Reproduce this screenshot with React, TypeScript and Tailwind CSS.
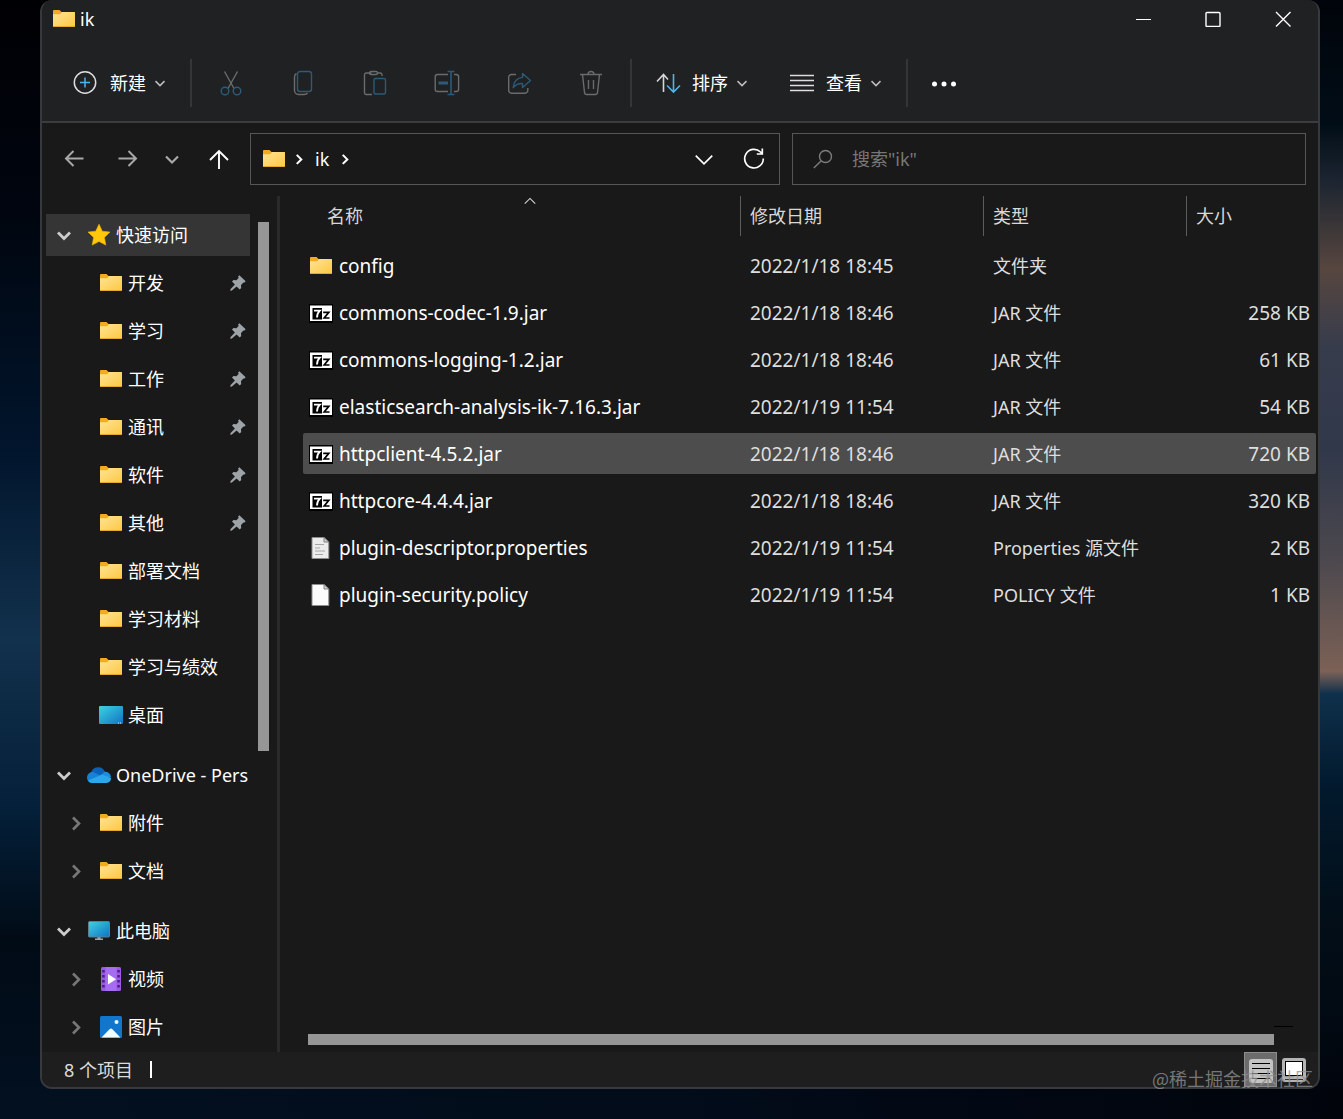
import type { ReactNode } from 'react'

type FileKind = 'folder' | 'archive' | 'text' | 'blank'

interface FileItem {
  name: string
  date: string
  type: string
  size?: string
  kind: FileKind
}

const FILES: FileItem[] = [
  { name: 'config', date: '2022/1/18 18:45', type: '文件夹', kind: 'folder' },
  { name: 'commons-codec-1.9.jar', date: '2022/1/18 18:46', type: 'JAR 文件', size: '258 KB', kind: 'archive' },
  { name: 'commons-logging-1.2.jar', date: '2022/1/18 18:46', type: 'JAR 文件', size: '61 KB', kind: 'archive' },
  { name: 'elasticsearch-analysis-ik-7.16.3.jar', date: '2022/1/19 11:54', type: 'JAR 文件', size: '54 KB', kind: 'archive' },
  { name: 'httpclient-4.5.2.jar', date: '2022/1/18 18:46', type: 'JAR 文件', size: '720 KB', kind: 'archive' },
  { name: 'httpcore-4.4.4.jar', date: '2022/1/18 18:46', type: 'JAR 文件', size: '320 KB', kind: 'archive' },
  { name: 'plugin-descriptor.properties', date: '2022/1/19 11:54', type: 'Properties 源文件', size: '2 KB', kind: 'text' },
  { name: 'plugin-security.policy', date: '2022/1/19 11:54', type: 'POLICY 文件', size: '1 KB', kind: 'blank' },
]

const ACTIVE_FILE = 'httpclient-4.5.2.jar'

const PINNED = ['开发', '学习', '工作', '通讯', '软件', '其他']
const RECENT = ['部署文档', '学习材料', '学习与绩效']

function FolderIcon() {
  return (
    <svg width="24" height="24" viewBox="0 0 24 24" className="shrink-0" aria-hidden="true">
      <defs>
        <linearGradient id="folder" x1="0" y1="0" x2="1" y2="1">
          <stop offset="0" stopColor="#ffe394" />
          <stop offset="1" stopColor="#fcc844" />
        </linearGradient>
      </defs>
      <path d="M1 4a1 1 0 0 1 1-1h5.500l2 2H22a1 1 0 0 1 1 1v4H1z" fill="#f0ab22" />
      <path d="M1 7.200h7.200L10 5h12.200a.8.8 0 0 1 .8.800V19a1 1 0 0 1-1 1H2a1 1 0 0 1-1-1z" fill="url(#folder)" />
      <path d="M1.500 19.500h21" stroke="#e3a92c" strokeWidth="1" />
    </svg>
  )
}

function StarIcon() {
  return (
    <svg width="24" height="24" viewBox="0 0 24 24" className="shrink-0" aria-hidden="true">
      <path
        d="M12 1.200l3.300 7 7.700.900-5.600 5.300 1.400 7.700L12 18.400l-6.800 3.700 1.400-7.700L1 9.100l7.700-.9z"
        fill="#ffc80a"
        stroke="#f7b500"
        strokeWidth=".6"
        strokeLinejoin="round"
      />
    </svg>
  )
}

function DesktopIcon() {
  return (
    <svg width="24" height="24" viewBox="0 0 24 24" className="shrink-0" aria-hidden="true">
      <defs>
        <linearGradient id="screen" x1="0" y1="0" x2="1" y2="1">
          <stop offset="0" stopColor="#3fd2e0" />
          <stop offset="1" stopColor="#0f73c4" />
        </linearGradient>
      </defs>
      <rect y="3" width="24" height="18" rx="1" fill="url(#screen)" />
      <path d="M19 20h1m1 0h1" stroke="#d7f3ff" strokeWidth="1" />
    </svg>
  )
}

function ComputerIcon() {
  return (
    <svg width="24" height="24" viewBox="0 0 24 24" className="shrink-0" aria-hidden="true">
      <path d="M10.500 17h3v2.500h2.500V21H8v-1.500h2.500z" fill="#9aa7ad" />
      <rect x="1.500" y="2.500" width="21" height="15.500" rx="1" fill="url(#screen)" stroke="#5f7f8c" strokeWidth="1" />
    </svg>
  )
}

function CloudIcon() {
  return (
    <svg width="24" height="24" viewBox="0 0 24 24" className="shrink-0" aria-hidden="true">
      <path d="M4 10A7.300 7.300 0 0 1 18 9L12 17 2 14z" fill="#0a62b8" />
      <path d="M0 14.800a5.500 5.500 0 0 1 7-5.600l9 4.800-5 6H5a5.300 5.300 0 0 1-5-5.200z" fill="#1681d6" />
      <path d="M12 14l5.500-5.300A6 6 0 0 1 24 14l-6 3z" fill="#1a8fe0" />
      <path d="M1 17.500L15 11.500l9 3.500a4.500 4.500 0 0 1-4.500 5H5a5 5 0 0 1-4-2.500z" fill="#2ba7ea" />
    </svg>
  )
}

function VideoIcon() {
  return (
    <svg width="24" height="24" viewBox="0 0 24 24" className="shrink-0" aria-hidden="true">
      <rect x="2" width="20" height="24" rx="1.500" fill="#9c5ae0" />
      <rect x="6.500" width="11" height="24" fill="#a76df0" />
      <path d="M3.200 3h2.500v2.500H3.200zm0 5h2.500v2.500H3.200zm0 5h2.500v2.500H3.200zm0 5h2.500v2.500H3.200zM18.300 3h2.500v2.500h-2.500zm0 5h2.500v2.500h-2.500zm0 5h2.500v2.500h-2.500zm0 5h2.500v2.500h-2.500z" fill="#4a1f86" />
      <path d="M9 7v10.500l8-5.200z" fill="#fff" />
    </svg>
  )
}

function PictureIcon() {
  return (
    <svg width="24" height="24" viewBox="0 0 24 24" className="shrink-0" aria-hidden="true">
      <rect x="1" y="1" width="22" height="22" rx="1.500" fill="#1277cc" />
      <path d="M2.500 22.500l8-8.300a2 2 0 0 1 2.900 0l8 8.300z" fill="#f2fbff" />
      <circle cx="17.500" cy="7" r="2" fill="#e8f7ff" />
    </svg>
  )
}

function ArchiveIcon() {
  return (
    <svg width="24" height="24" viewBox="0 0 24 24" className="shrink-0" aria-hidden="true">
      <rect y="3" width="24" height="19" fill="#000" />
      <rect x="1" y="4.500" width="22" height="15.500" fill="#fff" />
      <rect x="3.500" y="7" width="9.500" height="11.500" fill="#000" />
      <path d="M5 9.600h5.800c-1.900 1.800-2.700 3.800-2.800 6.900" fill="none" stroke="#fff" strokeWidth="1.900" />
      <path d="M14.200 11.300h5.600L15.200 17h5.300" fill="none" stroke="#000" strokeWidth="1.700" />
    </svg>
  )
}

function PageIcon({ lined }: { lined?: boolean }) {
  return (
    <svg width="24" height="24" viewBox="0 0 24 24" className="shrink-0" aria-hidden="true">
      <path d="M3 1.500h12L19.800 6v16.500H3z" fill={lined ? '#ececec' : '#fbfbfb'} stroke="#8c8c8c" strokeWidth="1" />
      <path d="M15 1.500V6h4.800z" fill="#d5d5d5" stroke="#6b6b6b" strokeWidth=".8" />
      {lined && <path d="M6 8.500h9M6 12h5M6 15h10M6 18.500h8" stroke="#a5a5a5" strokeWidth="1.100" />}
    </svg>
  )
}

const KIND_ICONS: Record<FileKind, ReactNode> = {
  folder: <FolderIcon />,
  archive: <ArchiveIcon />,
  text: <PageIcon lined />,
  blank: <PageIcon />,
}

function PinIcon() {
  return (
    <svg width="16" height="16" viewBox="0 0 16 16" className="shrink-0 text-[#9da3a6]" aria-hidden="true">
      <path d="M9.300.3l6.400 6-1.300 1.300-.9-.2-2.500 2.600.2 2.900-1.500 1.500-3.100-3L1.600 15.700.3 15.500l.1-1.200L4.900 9.600 2 6.600l1.500-1.500 3 .1L8.700 2.700l-.7-1z" fill="currentColor" />
    </svg>
  )
}

function Chevron({ dir = 'down', size = 16, weight = 2, className = '' }: {
  dir?: 'down' | 'right' | 'up'
  size?: number
  weight?: number
  className?: string
}) {
  const paths = { down: 'M2 5.500l6 6 6-6', right: 'M5 2.500l6 6-6 6', up: 'M2 11l6-6 6 6' }
  return (
    <svg width={size} height={size} viewBox="0 0 16 16" className={`shrink-0 ${className}`} aria-hidden="true">
      <path d={paths[dir]} fill="none" stroke="currentColor" strokeWidth={weight} />
    </svg>
  )
}

function ToolIcon({ children }: { children: ReactNode }) {
  return (
    <svg width="26" height="26" viewBox="0 0 26 26" fill="none" strokeWidth="1.400" className="shrink-0" aria-hidden="true">
      {children}
    </svg>
  )
}

const GRAY = '#6a6b6c'
const BLUE = '#2c5a78'

const TOOLS: { label: string; icon: ReactNode }[] = [
  {
    label: '剪切',
    icon: (
      <ToolIcon>
        <path d="M6.500 1.500l9.500 17M19.500 1.500L10 18.500" stroke={GRAY} />
        <circle cx="7" cy="21" r="3.800" stroke={BLUE} />
        <circle cx="19" cy="21" r="3.800" stroke={BLUE} />
      </ToolIcon>
    ),
  },
  {
    label: '复制',
    icon: (
      <ToolIcon>
        <path d="M6.500 3.500Q4.500 4.500 4.500 7v13.500a4 4 0 0 0 4 4H14q2.500 0 3.500-1.500" stroke={GRAY} />
        <rect x="7.500" y="1.500" width="14" height="20" rx="2.500" stroke={BLUE} />
      </ToolIcon>
    ),
  },
  {
    label: '粘贴',
    icon: (
      <ToolIcon>
        <path d="M9.500 3H4.200A1.700 1.700 0 0 0 2.500 4.700v18.100a1.700 1.700 0 0 0 1.700 1.700H10M15 3h3.300A1.700 1.700 0 0 1 20 4.700V6" stroke={GRAY} />
        <rect x="7.500" y="1.500" width="8" height="3" rx="1.500" stroke={GRAY} />
        <rect x="12" y="8.500" width="11.500" height="15.500" rx="1.500" stroke={BLUE} />
      </ToolIcon>
    ),
  },
  {
    label: '重命名',
    icon: (
      <ToolIcon>
        <path d="M14 4.500H3.500a2.300 2.300 0 0 0-2.300 2.300v12.400a2.300 2.300 0 0 0 2.300 2.300H14M20 4.500h2.300a2.300 2.300 0 0 1 2.300 2.300v12.400a2.300 2.300 0 0 1-2.300 2.300H20" stroke={GRAY} />
        <path d="M17 1.500v23M13.500 1.500h7M13.500 24.500h7" stroke={BLUE} strokeWidth="1.600" />
        <path d="M4.500 13h9.500" stroke={BLUE} strokeWidth="3" />
      </ToolIcon>
    ),
  },
  {
    label: '共享',
    icon: (
      <ToolIcon>
        <path d="M10 4.500H5.500A2.800 2.800 0 0 0 2.700 7.300v13A2.800 2.800 0 0 0 5.500 23.200h13.500a2.800 2.800 0 0 0 2.800-2.900V18" stroke={GRAY} />
        <path d="M16.500 3.500l8 7-8 7v-4c-4-.2-7 1-9.300 4.200C7.500 11.500 11.500 7.700 16.500 7.400z" stroke={BLUE} strokeLinejoin="round" />
      </ToolIcon>
    ),
  },
  {
    label: '删除',
    icon: (
      <ToolIcon>
        <path d="M2 4.500h22M10 4.500a3 3 0 0 1 6 0M4.500 4.500l2 18a2.200 2.200 0 0 0 2.200 2h8.600a2.200 2.200 0 0 0 2.200-2l2-18M10.500 10v9M15.500 10v9" stroke={GRAY} />
      </ToolIcon>
    ),
  },
]

function Divider() {
  return <div className="h-12 w-0.5 shrink-0 bg-[#353637]" />
}

function TitleBar() {
  return (
    <div className="flex h-11 items-center bg-[#202122] pb-1.5 pl-2.5">
      <FolderIcon />
      <span className="ml-1 flex-1">ik</span>
      <button type="button" aria-label="最小化" className="flex w-[70px] justify-center">
        <svg width="16" height="16" viewBox="0 0 16 16" stroke="#fff" aria-hidden="true">
          <path d="M1 8.500h15" />
        </svg>
      </button>
      <button type="button" aria-label="最大化" className="flex w-[70px] justify-center">
        <svg width="16" height="16" viewBox="0 0 16 16" fill="none" stroke="#fff" strokeWidth="1.400" aria-hidden="true">
          <rect x="1" y="1.500" width="14" height="14" rx="1" />
        </svg>
      </button>
      <button type="button" aria-label="关闭" className="flex w-[70px] justify-center">
        <svg width="16" height="16" viewBox="0 0 16 16" fill="none" stroke="#fff" strokeWidth="1.400" aria-hidden="true">
          <path d="M1 1l14.500 14.500M15.500 1L1 15.500" />
        </svg>
      </button>
    </div>
  )
}

function Toolbar() {
  return (
    <div className="flex h-[79px] items-center border-b-2 border-[#3b3c3d] bg-[#202122] pl-[30px]">
      <button type="button" className="mr-6 flex items-center">
        <svg width="26" height="26" viewBox="0 0 26 26" fill="none" aria-hidden="true">
          <circle cx="13" cy="12.500" r="10.700" stroke="#dcdcdc" strokeWidth="1.500" />
          <path d="M13 7.500v10M8 12.500h10" stroke="#4cb4ee" strokeWidth="1.500" />
        </svg>
        <span className="mr-2 ml-3">新建</span>
        <Chevron size={12} weight={2} className="text-[#bdbdbd]" />
      </button>
      <Divider />
      <div className="mx-[3px] flex">
        {TOOLS.map((tool) => (
          <button key={tool.label} type="button" aria-label={tool.label} className="flex w-[72px] justify-center">
            {tool.icon}
          </button>
        ))}
      </div>
      <Divider />
      <button type="button" className="ml-[23px] flex items-center">
        <svg width="26" height="26" viewBox="0 0 26 26" fill="none" strokeWidth="1.600" aria-hidden="true">
          <path d="M8.500 22V5M2 11.500L8.500 4.500 13 9.500" stroke="#d6d6d6" />
          <path d="M18.500 4v17M12 15.500l6.500 6.500 6.500-6.500" stroke="#4cb4ee" />
        </svg>
        <span className="mr-2 ml-[11px]">排序</span>
        <Chevron size={12} weight={2} className="text-[#bdbdbd]" />
      </button>
      <button type="button" className="mr-6 ml-[41px] flex items-center">
        <svg width="26" height="26" viewBox="0 0 26 26" stroke="#dedede" strokeWidth="1.400" aria-hidden="true">
          <path d="M1 5.500h24M1 10.500h24M1 15.500h24M1 20.500h24" />
        </svg>
        <span className="mr-2 ml-[11px]">查看</span>
        <Chevron size={12} weight={2} className="text-[#bdbdbd]" />
      </button>
      <Divider />
      <button type="button" aria-label="更多" className="ml-[23px]">
        <svg width="26" height="26" viewBox="0 0 26 26" fill="#fff" aria-hidden="true">
          <circle cx="3.500" cy="14" r="2.500" />
          <circle cx="13" cy="14" r="2.500" />
          <circle cx="22.500" cy="14" r="2.500" />
        </svg>
      </button>
    </div>
  )
}

function AddressRow() {
  return (
    <div className="flex items-center pt-2.5 pr-3 pb-[11px] pl-[22px]">
      <button type="button" aria-label="后退" className="mr-[34px] text-[#a8a8a8]">
        <svg width="20" height="20" viewBox="0 0 20 20" fill="none" stroke="currentColor" strokeWidth="2" aria-hidden="true">
          <path d="M19.500 9.500H2M9.500 2L2 9.500 9.500 17" />
        </svg>
      </button>
      <button type="button" aria-label="前进" className="mr-[26px] text-[#a8a8a8]">
        <svg width="20" height="20" viewBox="0 0 20 20" fill="none" stroke="currentColor" strokeWidth="2" aria-hidden="true">
          <path d="M.5 9.500H18M10.500 2L18 9.500 10.500 17" />
        </svg>
      </button>
      <button type="button" aria-label="最近浏览的位置" className="mr-7 text-[#a8a8a8]">
        <Chevron weight={2.2} />
      </button>
      <button type="button" aria-label="上移" className="mr-5">
        <svg width="22" height="22" viewBox="0 0 22 22" fill="none" stroke="#fff" strokeWidth="1.900" aria-hidden="true">
          <path d="M11 21V3M2 12l9-9 9 9" />
        </svg>
      </button>
      <div className="mr-3 flex h-[52px] flex-[503] items-center border border-[#565656] pr-3.5 pl-[11px]">
        <FolderIcon />
        <Chevron dir="right" size={12} weight={2.8} className="mx-[7px]" />
        <a href="#ik" className="mx-[3px]">ik</a>
        <Chevron dir="right" size={12} weight={2.8} className="mx-[7px]" />
        <button type="button" aria-label="以前的位置" className="mr-7 ml-auto">
          <Chevron size={22} weight={1.2} />
        </button>
        <button type="button" aria-label="刷新">
          <svg width="22" height="22" viewBox="0 0 22 22" fill="none" stroke="#fff" strokeWidth="1.700" aria-hidden="true">
            <path d="M20.300 10.500A9.300 9.300 0 1 1 17.500 4l1.500 1.500M19.300.5V6h-5.500" />
          </svg>
        </button>
      </div>
      <label className="flex h-[52px] flex-[492] items-center border border-[#565656] pl-5">
        <svg width="20" height="20" viewBox="0 0 20 20" fill="none" stroke="#7d7d7d" strokeWidth="1.400" aria-hidden="true">
          <circle cx="12.500" cy="7.500" r="6" />
          <path d="M8 12L.8 19" />
        </svg>
        <input
          type="text"
          aria-label="搜索"
          placeholder={'搜索"ik"'}
          className="ml-[19px] min-w-0 flex-1 bg-transparent outline-none placeholder:text-[#777777]"
        />
      </label>
    </div>
  )
}

function Group({ icon, label, active, children }: {
  icon: ReactNode
  label: string
  active?: boolean
  children: ReactNode
}) {
  return (
    <section className="mb-3">
      <div className="flex h-12 items-center pl-1">
        <a
          href="#group"
          className={`flex h-[42px] w-full items-center whitespace-nowrap ${active ? 'bg-[#353535]' : ''}`}
        >
          <Chevron weight={2.8} className="mr-[15px] ml-2.5 text-[#cccccc]" />
          {icon}
          <span className="ml-[5px]">{label}</span>
        </a>
      </div>
      <ul>{children}</ul>
    </section>
  )
}

function Entry({ icon, label, pinned, expandable }: {
  icon: ReactNode
  label: string
  pinned?: boolean
  expandable?: boolean
}) {
  return (
    <li>
      <a href="#entry" className="flex h-12 items-center pr-1 pl-[26px]">
        <span className="mr-[15px] w-4">
          {expandable && <Chevron dir="right" weight={2.6} className="text-[#777777]" />}
        </span>
        {icon}
        <span className="ml-[5px] flex-1">{label}</span>
        {pinned && <PinIcon />}
      </a>
    </li>
  )
}

function Sidebar() {
  return (
    <div className="flex w-[238px] shrink-0 border-r-[3px] border-[#2a2a2a]">
      <nav className="w-[208px] pt-[15px]">
        <Group icon={<StarIcon />} label="快速访问" active>
          {PINNED.map((label) => (
            <Entry key={label} icon={<FolderIcon />} label={label} pinned />
          ))}
          {RECENT.map((label) => (
            <Entry key={label} icon={<FolderIcon />} label={label} />
          ))}
          <Entry icon={<DesktopIcon />} label="桌面" />
        </Group>
        <Group icon={<CloudIcon />} label="OneDrive - Pers">
          <Entry icon={<FolderIcon />} label="附件" expandable />
          <Entry icon={<FolderIcon />} label="文档" expandable />
        </Group>
        <div className="-mb-3">
          <Group icon={<ComputerIcon />} label="此电脑">
            <Entry icon={<VideoIcon />} label="视频" expandable />
            <Entry icon={<PictureIcon />} label="图片" expandable />
          </Group>
        </div>
      </nav>
      <div className="mt-[26px] ml-2 h-[529px] w-[11px] bg-[#969696]" />
    </div>
  )
}

function FileRow({ file }: { file: FileItem }) {
  const active = file.name === ACTIVE_FILE
  const bg = active ? 'bg-[#4d4d4d]' : ''
  return (
    <tr className="text-[#dedede]">
      <td className="py-[3px]">
        <div className={`flex h-[41px] items-center rounded-l-xs pl-1.5 text-[19px] text-white ${bg}`}>
          {KIND_ICONS[file.kind]}
          <span className="ml-1.5">{file.name}</span>
        </div>
      </td>
      <td className="py-[3px]">
        <div className={`flex h-[41px] items-center pl-2.5 text-[19px] ${bg}`}>{file.date}</div>
      </td>
      <td className="py-[3px]">
        <div className={`flex h-[41px] items-center pl-2.5 ${bg}`}>{file.type}</div>
      </td>
      <td className="py-[3px]">
        <div className={`flex h-[41px] items-center justify-end rounded-r-xs pr-1.5 text-[19px] ${bg}`}>{file.size}</div>
      </td>
    </tr>
  )
}

function FileTable() {
  return (
    <main className="flex min-w-0 flex-1 flex-col">
      <div className="pr-0.5 pl-[23px]">
        <table className="w-full table-fixed whitespace-nowrap">
          <colgroup>
            <col />
            <col className="w-[243px]" />
            <col className="w-[203px]" />
            <col className="w-[130px]" />
          </colgroup>
          <thead className="text-left text-[#d8d8d8]">
            <tr>
              <th className="p-0 pb-1.5 font-normal">
                <div className="relative flex h-10 items-center pl-6">
                  名称
                  <Chevron dir="up" size={14} weight={1.2} className="absolute top-[-2px] left-[220px]" />
                </div>
              </th>
              {['修改日期', '类型', '大小'].map((label) => (
                <th key={label} className="p-0 pb-1.5 font-normal">
                  <div className="flex h-10 items-center border-l border-[#5c5c5c] pl-[9px]">{label}</div>
                </th>
              ))}
            </tr>
          </thead>
          <tbody>
            {FILES.map((file) => (
              <FileRow key={file.name} file={file} />
            ))}
          </tbody>
        </table>
      </div>
      <div className="mt-auto mb-[7px] flex pr-[25px] pl-7">
        <div className="mt-2 h-[11px] flex-1 bg-[#969696]" />
        <div className="h-px w-[19px] bg-black" />
      </div>
    </main>
  )
}

function StatusBar() {
  return (
    <footer className="flex h-[35px] items-center bg-[#1e1e1e] pr-3 pl-[22px] text-[#dcdcdc]">
      <span>8 个项目</span>
      <span className="ml-[17px] h-[17px] w-0.5 bg-white" />
      <button type="button" aria-label="详细信息" className="ml-auto flex h-[35px] w-[33px] items-center justify-center border border-[#8c8c8c] bg-[#6c6c6c]">
        <svg width="26" height="26" viewBox="0 0 26 26" aria-hidden="true">
          <rect x="1" y="2" width="24" height="24" rx="3" fill="#c4c4c4" />
          <path d="M4 6.500h18M4 11.500h18M4 16.500h18M4 21.500h18" stroke="#000" />
        </svg>
      </button>
      <button type="button" aria-label="大缩略图" className="ml-[5px]">
        <svg width="24" height="24" viewBox="0 0 24 24" aria-hidden="true">
          <rect width="24" height="24" rx="3" fill="#b4b4b4" />
          <rect x="3.500" y="3.500" width="17" height="14" fill="#fff" stroke="#000" />
          <path d="M3 21.500h18" stroke="#333" />
        </svg>
      </button>
    </footer>
  )
}

export default function App() {
  return (
    <div className="relative flex min-h-screen flex-col bg-[linear-gradient(#000003,#000610_20%,#01152c_40%,#12314c_57%,#0d2a44_63%,#04203a_72%,#010b16_84%,#021020_100%)]">
      <div className="absolute top-0 right-0 bottom-0 w-10 bg-[linear-gradient(#01040a,#010d16_11%,#1b2430_16%,#57463f_24%,#373c4c_31%,#30384a_40%,#4c484e_50%,#7c6156_60%,#0f304b_62%,#021a2e_70%,#020e18_82%,#01040b_100%)]" />
      <div className="absolute right-0 bottom-0 left-0 h-8 bg-linear-to-r from-[#021020] via-[#020c1a] to-[#01040b]" />
      <div className="relative mr-[23px] mb-[30px] ml-10 flex flex-1 flex-col overflow-hidden rounded-xl border-2 border-t-0 border-[#38393c] bg-[#191919] font-['Noto_Sans','Noto_Sans_CJK_SC',sans-serif] text-[18px] leading-6 text-white">
        <TitleBar />
        <Toolbar />
        <AddressRow />
        <div className="flex flex-1">
          <Sidebar />
          <FileTable />
        </div>
        <StatusBar />
      </div>
      <p className="pointer-events-none absolute right-[30px] bottom-[29px] font-['Noto_Sans_CJK_SC',sans-serif] text-[18px] leading-6 text-[#8f8f8f]/80">
        @稀土掘金技术社区
      </p>
    </div>
  )
}
